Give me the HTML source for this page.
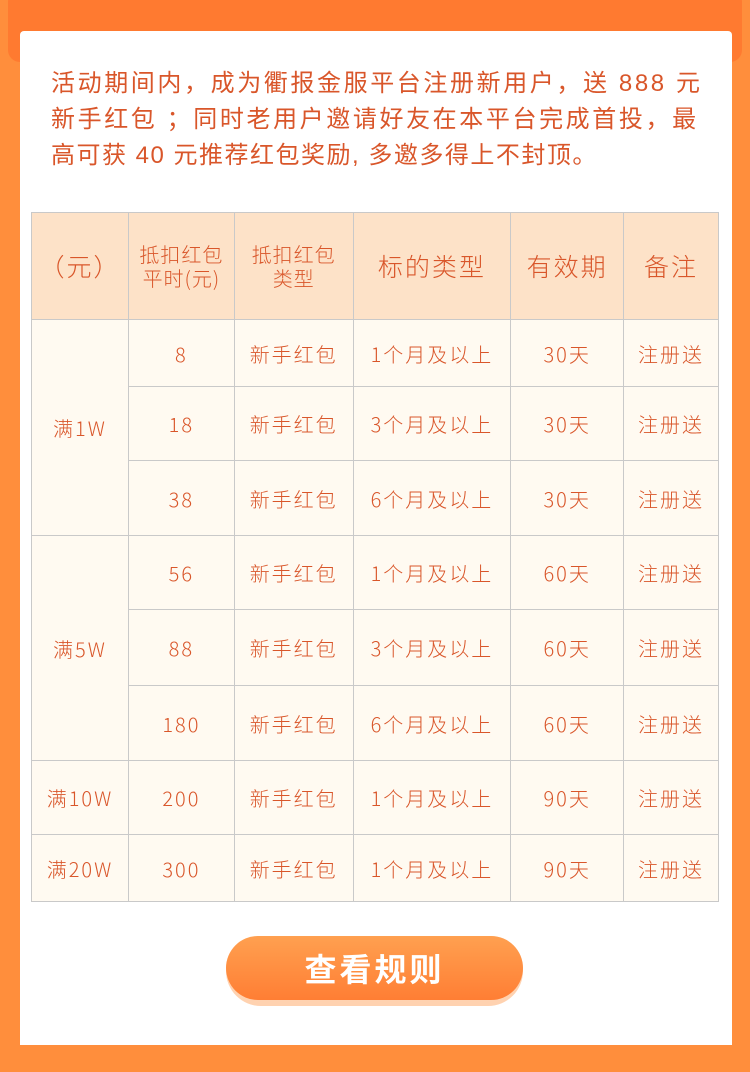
<!DOCTYPE html>
<html><head><meta charset="utf-8"><style>
*{margin:0;padding:0;box-sizing:border-box}
body{width:750px;height:1072px;background:#ff8e3c;position:relative;overflow:hidden;font-family:"Liberation Sans","Noto Sans CJK SC",sans-serif;color:#d9562a}
.bar{position:absolute;left:8px;top:-10px;width:734px;height:72px;background:#ff7a30;border-radius:12px}
.panel{position:absolute;left:20px;top:31px;width:712px;height:1014px;background:#fff;border-radius:4px 4px 0 0}
.intro{position:absolute;left:51px;top:66px;width:690px;font-size:24px;line-height:36px;color:#d9562a;white-space:nowrap;letter-spacing:2.6px}
table{position:absolute;left:31px;top:212px;border-collapse:collapse;width:688px;font-family:"Noto Sans CJK SC",sans-serif}
td{border:1px solid #c9c9c9;text-align:center;background:#fffaf1;font-size:20px;letter-spacing:2px;color:#d9562a;font-weight:300}
tr.h td{background:#fde2c8;font-size:25px;letter-spacing:2px;height:107px}
tr.h td.s{font-size:20px;line-height:24px;letter-spacing:1px}
.btn{position:absolute;left:226px;top:936px;width:297px;height:70px;border-radius:35px;background:#ffd2b0}
.btn div{height:64px;border-radius:32px;background:linear-gradient(#ffa050,#ff7e34);color:#fff;font-size:32px;font-weight:bold;letter-spacing:3px;text-align:center;line-height:64px;font-family:"Noto Sans CJK SC",sans-serif}
</style></head><body>
<div class="bar"></div>
<div class="panel"></div>
<div class="intro">活动期间内，成为衢报金服平台注册新用户，送 888 元<br>新手红包 ；同时老用户邀请好友在本平台完成首投，最<br><span style="letter-spacing:1.5px">高可获 40 元推荐红包奖励, 多邀多得上不封顶。</span></div>
<table>
<colgroup><col style="width:97px"><col style="width:106px"><col style="width:119px"><col style="width:158px"><col style="width:113px"><col style="width:95px"></colgroup>
<tr class="h"><td>（元）</td><td class="s">抵扣红包<br>平时(元)</td><td class="s">抵扣红包<br>类型</td><td>标的类型</td><td>有效期</td><td>备注</td></tr>
<tr style="height:67px"><td rowspan="3">满1W</td><td>8</td><td>新手红包</td><td>1个月及以上</td><td>30天</td><td>注册送</td></tr>
<tr style="height:74px"><td>18</td><td>新手红包</td><td>3个月及以上</td><td>30天</td><td>注册送</td></tr>
<tr style="height:75px"><td>38</td><td>新手红包</td><td>6个月及以上</td><td>30天</td><td>注册送</td></tr>
<tr style="height:74px"><td rowspan="3">满5W</td><td>56</td><td>新手红包</td><td>1个月及以上</td><td>60天</td><td>注册送</td></tr>
<tr style="height:76px"><td>88</td><td>新手红包</td><td>3个月及以上</td><td>60天</td><td>注册送</td></tr>
<tr style="height:75px"><td>180</td><td>新手红包</td><td>6个月及以上</td><td>60天</td><td>注册送</td></tr>
<tr style="height:74px"><td>满10W</td><td>200</td><td>新手红包</td><td>1个月及以上</td><td>90天</td><td>注册送</td></tr>
<tr style="height:67px"><td>满20W</td><td>300</td><td>新手红包</td><td>1个月及以上</td><td>90天</td><td>注册送</td></tr>
</table>
<div class="btn"><div>查看规则</div></div>
</body></html>
